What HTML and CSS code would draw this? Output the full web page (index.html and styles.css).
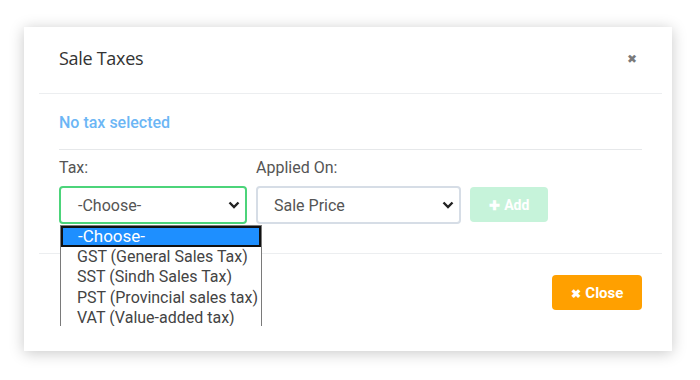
FILE: index.html
```html
<!DOCTYPE html>
<html>
<head>
<meta charset="utf-8">
<link rel="stylesheet" href="styles.css">
</head>
<body>
<div class="page">
  <div class="modal">
    <div class="modal-header">
      <h1 class="title">Sale Taxes</h1>
      <span class="x-close">&#x2716;</span>
    </div>
    <div class="modal-body">
      <div class="status">No tax selected</div>
      <div class="form-row">
        <div class="field field-tax">
          <label class="label">Tax:</label>
          <div class="select select-active">
            <span>-Choose-</span>
            <svg class="chev" width="12" height="8" viewBox="0 0 12 8"><path d="M1.5 1.5 L6 6 L10.5 1.5" fill="none" stroke="#222" stroke-width="2.4"/></svg>
          </div>
          <div class="dropdown">
            <div class="opt opt-sel">-Choose-</div>
            <div class="opt">GST (General Sales Tax)</div>
            <div class="opt">SST (Sindh Sales Tax)</div>
            <div class="opt">PST (Provincial sales tax)</div>
            <div class="opt">VAT (Value-added tax)</div>
          </div>
        </div>
        <div class="field field-applied">
          <label class="label">Applied On:</label>
          <div class="select">
            <span>Sale Price</span>
            <svg class="chev" width="12" height="8" viewBox="0 0 12 8"><path d="M1.5 1.5 L6 6 L10.5 1.5" fill="none" stroke="#222" stroke-width="2.4"/></svg>
          </div>
        </div>
        <button class="btn btn-add"><span class="ico ico-plus">&#x271A;</span> Add</button>
      </div>
    </div>
    <div class="modal-footer">
      <button class="btn btn-close"><span class="ico">&#x2716;</span> Close</button>
    </div>
  </div>
</div>
</body>
</html>
```

FILE: styles.css
```css
* { box-sizing: border-box; }
html, body { margin: 0; padding: 0; background: #fff; }
body { font-family: Roboto, "Liberation Sans", sans-serif; color: #444; }

.page {
  width: 700px;
  height: 380px;
  padding: 27px 28px 29px 24px;
}

.modal {
  background: #fff;
  height: 324px;
  box-shadow: 0 2px 14px rgba(0, 0, 0, 0.22);
  display: flex;
  flex-direction: column;
}

.modal-header {
  margin: 0 10px 0 15px;
  height: 67px;
  padding: 0 25px 4px 20px;
  border-bottom: 1px solid #eceef0;
  display: flex;
  align-items: center;
  justify-content: space-between;
}

.title {
  margin: 0;
  font-family: "Open Sans", sans-serif;
  font-weight: 400;
  font-size: 18px;
  color: #333;
  letter-spacing: -0.3px;
}

.x-close {
  font-size: 12px;
  color: #7a7a7a;
  padding-top: 2px;
}

.modal-body {
  margin: 0 10px 0 15px;
  padding: 0 20px 0 20px;
  height: 160px;
  border-bottom: 1px solid #eceef0;
}

.status {
  height: 56px;
  border-bottom: 1px solid #e6e8ea;
  color: #6cb6f5;
  font-size: 16px;
  font-weight: 500;
  display: flex;
  align-items: center;
  padding-top: 2px;
}

.form-row {
  display: flex;
  align-items: flex-end;
  gap: 9px;
  padding-top: 8px;
}

.field { position: relative; display: flex; flex-direction: column; }
.field-tax { width: 188px; }
.field-applied { width: 205px; }

.label {
  font-size: 16px;
  color: #555;
  height: 28px;
  line-height: 20px;
}

.select {
  height: 38px;
  border: 2px solid #d6dde6;
  border-radius: 4px;
  display: flex;
  align-items: center;
  justify-content: space-between;
  padding: 0 5px 0 16px;
  font-size: 16px;
  color: #555;
}

.select-active { border-color: #4cd47a; padding-left: 17px; }

.chev { display: block; }

.dropdown {
  position: absolute;
  left: 1px;
  top: 67px;
  width: 202px;
  height: 101px;
  overflow: hidden;
  background: #fff;
  border: 1px solid #7a7a7a;
  border-bottom: none;
}

.opt {
  height: 20.5px;
  line-height: 20.5px;
  padding-left: 16px;
  font-size: 16px;
  color: #444;
  white-space: nowrap;
}

.opt-sel {
  background: #1e8fff;
  color: #fff;
  border: 2px solid #111;
  line-height: 16px;
  padding-left: 15px;
  font-size: 17px;
}

.btn {
  border: none;
  border-radius: 4px;
  color: #fff;
  font-family: Roboto, sans-serif;
  font-weight: 700;
  font-size: 14px;
}

.btn .ico { font-size: 12px; margin-right: 1px; }
.btn .ico-plus { font-size: 13px; }

.btn-add {
  width: 78px;
  height: 35px;
  background: #c6f3da;
  margin-bottom: 2px;
}

.modal-footer {
  flex: 1;
  display: flex;
  justify-content: flex-end;
  align-items: flex-start;
  padding: 21px 30px 0 0;
}

.btn-close {
  width: 90px;
  height: 35px;
  background: #ffa000;
  font-size: 15px;
}
```
